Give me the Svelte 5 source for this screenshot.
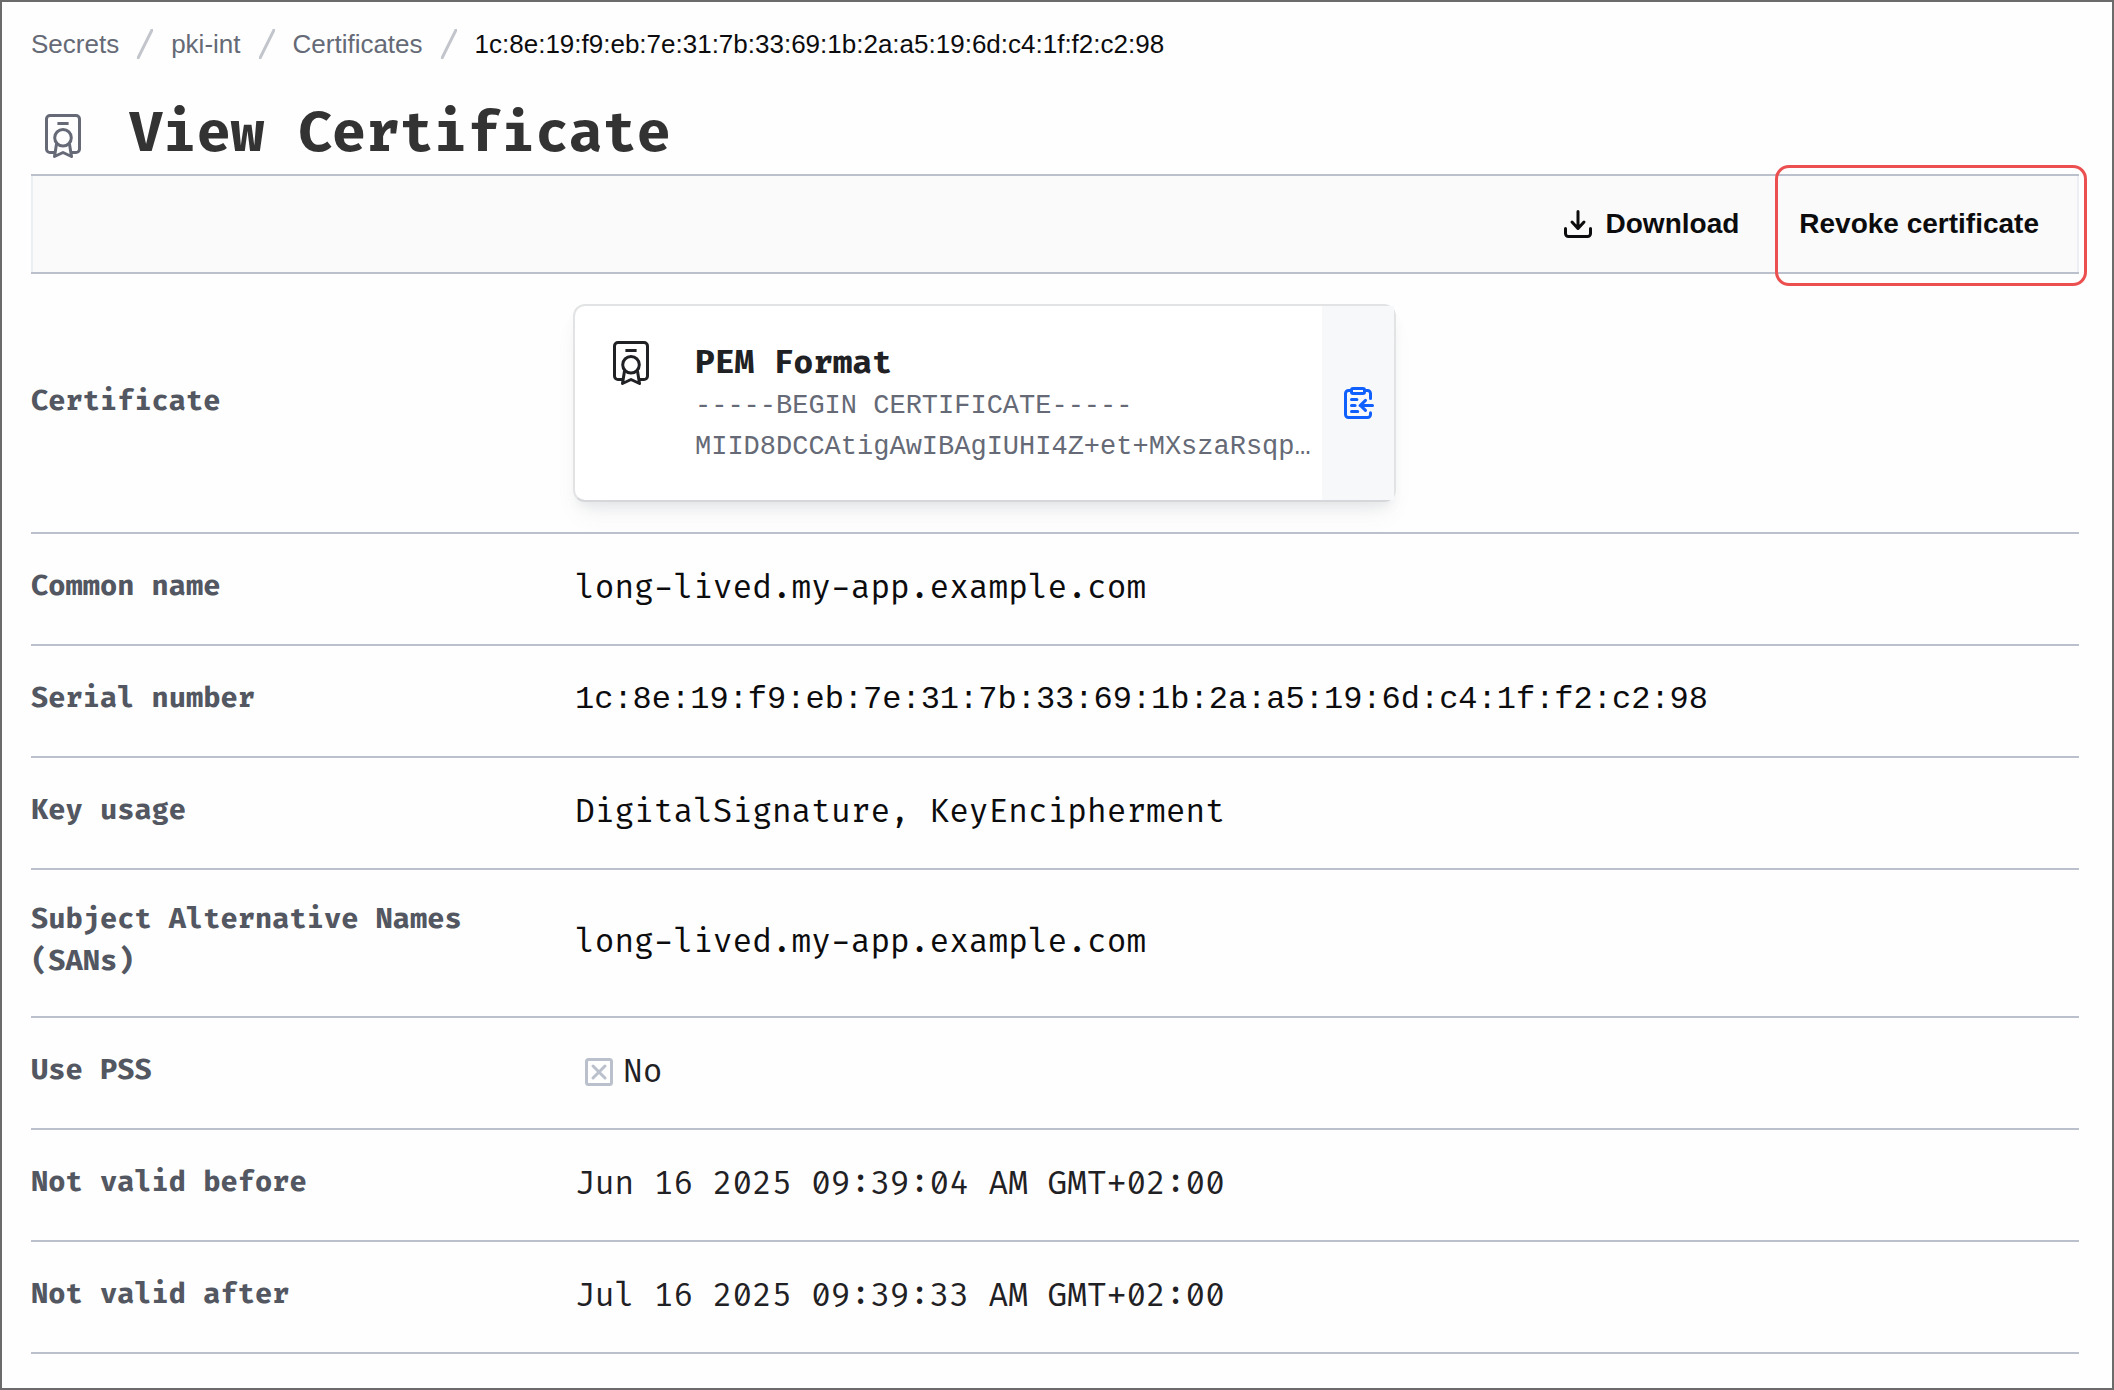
<script>
  const crumbs = ['Secrets', 'pki-int', 'Certificates'];
  const serial = '1c:8e:19:f9:eb:7e:31:7b:33:69:1b:2a:a5:19:6d:c4:1f:f2:c2:98';
  const pem = ['-----BEGIN CERTIFICATE-----', 'MIID8DCCAtigAwIBAgIUHI4Z+et+MXszaRsqp…'];
  const rows = [
    { label: 'Common name', value: 'long-lived.my-app.example.com' },
    { label: 'Serial number', value: serial, kind: 'code' },
    { label: 'Key usage', value: 'DigitalSignature, KeyEncipherment' },
    { label: 'Subject Alternative Names (SANs)', value: 'long-lived.my-app.example.com' },
    { label: 'Use PSS', value: 'No', kind: 'flag' },
    { label: 'Not valid before', value: 'Jun 16 2025 09:39:04 AM GMT+02:00', kind: 'soft' },
    { label: 'Not valid after', value: 'Jul 16 2025 09:39:33 AM GMT+02:00', kind: 'soft' }
  ];
</script>

{#snippet certificateIcon()}
  <svg class="cert-icon" viewBox="0 0 24 24" aria-hidden="true">
    <path d="M8.200 20.250H5.500a1.750 1.750 0 0 1-1.750-1.750v-15A1.750 1.750 0 0 1 5.500 1.750h13a1.750 1.750 0 0 1 1.750 1.750v15a1.750 1.750 0 0 1-1.750 1.750h-2.700" />
    <path d="M9.200 5.750h5.600" />
    <circle cx="12" cy="12.850" r="4.150" />
    <path d="M8.800 15.800 7.750 22.250 12 20.250l4.250 2L15.200 15.800" />
  </svg>
{/snippet}

<main class="page">
  <nav aria-label="Breadcrumb">
    <ol class="crumbs">
      {#each crumbs as crumb}
        <li>
          <a href="#{crumb}">{crumb}</a>
          <svg class="slash" viewBox="0 0 16 30" aria-hidden="true"><path d="M15 1 1 29" /></svg>
        </li>
      {/each}
      <li class="current" aria-current="page">{serial}</li>
    </ol>
  </nav>

  <header class="title">
    {@render certificateIcon()}
    <h1>View Certificate</h1>
  </header>

  <div class="toolbar">
    <button type="button" class="action">
      <svg class="icon" viewBox="0 0 16 16" aria-hidden="true">
        <path d="M8 1.750v8.500M5 7l3 3.250L11 7M1.750 10.250v2.500a1.500 1.500 0 0 0 1.500 1.500h9.500a1.500 1.500 0 0 0 1.500-1.500v-2.500" />
      </svg>
      Download
    </button>
    <button type="button" class="action revoke">Revoke certificate</button>
  </div>

  <dl>
    <div class="row">
      <dt>Certificate</dt>
      <dd>
        <article class="card">
          <div class="card-body">
            {@render certificateIcon()}
            <div class="card-text">
              <h2>PEM Format</h2>
              {#each pem as line}
                <p>{line}</p>
              {/each}
            </div>
          </div>
          <button type="button" class="copy" aria-label="Copy certificate">
            <svg class="icon" viewBox="0 0 16 16" aria-hidden="true">
              <rect x="4.750" y="0.750" width="6.500" height="2.500" rx="0.750" />
              <path d="M4.500 1.750H3.250a1.500 1.500 0 0 0-1.500 1.500v10.500a1.500 1.500 0 0 0 1.500 1.500h9.500a1.500 1.500 0 0 0 1.500-1.500v-.9M11.500 1.750h1.250a1.500 1.500 0 0 1 1.500 1.500v2.500" />
              <path d="M4.750 6.200h2.700M4.750 9.200h1.800M4.750 12.200h3.100M15.250 9.200H9M11.750 6.700 9.200 9.200l2.550 2.500" />
            </svg>
          </button>
        </article>
      </dd>
    </div>
    {#each rows as { label, value, kind }}
      <div class="row">
        <dt>{label}</dt>
        <dd class={kind}>
          {#if kind === 'flag'}
            <svg class="icon" viewBox="0 0 16 16" aria-hidden="true">
              <rect x="1.750" y="1.750" width="12.500" height="12.500" rx="1" />
              <path d="m5 5 6 6M11 5l-6 6" />
            </svg>
          {/if}
          {value}
        </dd>
      </div>
    {/each}
  </dl>
</main>

<style>
  :global(body) {
    background: #fefefe;
  }

  .page {
    --sans: "Liberation Sans", Arial, sans-serif;
    --mono: "Fira Code", "Fira Mono", "Liberation Mono", monospace;
    box-sizing: border-box;
    min-height: 100vh;
    padding: 24px 33px 24px 29px;
    border: 2px solid #6b6b6b;
    color: #0c0c0e;
    font-family: var(--mono);
  }

  svg {
    flex: none;
    fill: none;
    stroke: currentColor;
    stroke-width: 1.5;
    stroke-linecap: round;
    stroke-linejoin: round;
  }

  .icon {
    width: 32px;
    height: 32px;
  }

  .cert-icon {
    width: 48px;
    height: 48px;
    stroke-linecap: butt;
  }

  .crumbs,
  .crumbs li {
    display: flex;
    align-items: center;
    gap: 18px;
  }

  .crumbs {
    height: 36px;
    margin: 0;
    padding: 0;
    list-style: none;
    font: 26px/36px var(--sans);
  }

  .crumbs a {
    color: #656a76;
    text-decoration: none;
  }

  .crumbs .current {
    color: #0c0c0e;
  }

  .slash {
    width: 16px;
    height: 30px;
    stroke: #c2c5cb;
    stroke-width: 3;
  }

  .title {
    display: flex;
    align-items: flex-start;
    gap: 42px;
    box-sizing: border-box;
    height: 112px;
    padding: 36px 0 0 8px;
    color: #656a76;
  }

  .title .cert-icon {
    margin-top: 14px;
  }

  h1 {
    margin: 0;
    color: #333;
    font-size: 55px;
    line-height: 72px;
  }

  .toolbar {
    display: flex;
    justify-content: flex-end;
    box-sizing: border-box;
    height: 100px;
    border: solid #bac1cc;
    border-width: 2px 0;
    background: #fafafa;
    box-shadow: inset 2px 0 #ebeef2, inset -2px 0 #ebeef2;
  }

  .action {
    display: flex;
    align-items: center;
    gap: 12px;
    padding: 0 35px;
    border: 0;
    background: none;
    color: #0c0c0e;
    font: 700 28px/36px var(--sans);
  }

  .revoke {
    position: relative;
    padding: 0 40px 0 25px;
  }

  /* Callout ring that hangs over the toolbar's edges */
  .revoke::after {
    content: "";
    position: absolute;
    inset: -11px -8px -14px 1px;
    border: 3px solid #ec4f4f;
    border-radius: 14px;
  }

  dl {
    margin: 0;
  }

  .row {
    display: grid;
    grid-template-columns: 480px 1fr;
    column-gap: 64px;
    align-items: center;
    padding: 29px 0 31px;
    border-bottom: 2px solid #bac1cc;
  }

  .row:first-child {
    padding: 30px 0;
  }

  dt {
    padding-bottom: 2px;
    color: #535761;
    font-size: 28px;
    font-weight: 700;
    line-height: 42px;
  }

  dd {
    display: flex;
    align-items: center;
    gap: 8px;
    margin: 0;
    font-size: 32px;
    line-height: 50px;
  }

  .code {
    font-family: "Liberation Mono", monospace;
  }

  .soft,
  .flag {
    color: #1f2124;
  }

  .flag {
    padding-left: 8px;
  }

  .flag .icon {
    color: #bac1cc;
  }

  .card {
    display: flex;
    box-sizing: border-box;
    width: 823px;
    height: 198px;
    margin-left: -2px;
    border: 2px solid #e2e3e5;
    border-bottom-color: #d5d7da;
    border-radius: 12px;
    background: #fff;
    box-shadow: 0 8px 12px -4px rgba(101, 106, 118, 0.1), 0 16px 24px -8px rgba(101, 106, 118, 0.1);
  }

  .card-body {
    display: flex;
    flex: 1;
    gap: 40px;
    padding: 33px 0 0 32px;
    color: #1f2124;
  }

  .card-text {
    padding-top: 1px;
  }

  .card h2,
  .card p {
    margin: 0;
    white-space: nowrap;
  }

  .card h2 {
    font-size: 32px;
    line-height: 46px;
  }

  .card p {
    color: #656a76;
    font-family: "Liberation Mono", monospace;
    font-size: 27px;
    line-height: 41px;
  }

  .copy {
    display: grid;
    place-items: center;
    width: 72px;
    padding: 0;
    border: 0;
    background: #f7f8fa;
    color: #1060ff;
  }
</style>
